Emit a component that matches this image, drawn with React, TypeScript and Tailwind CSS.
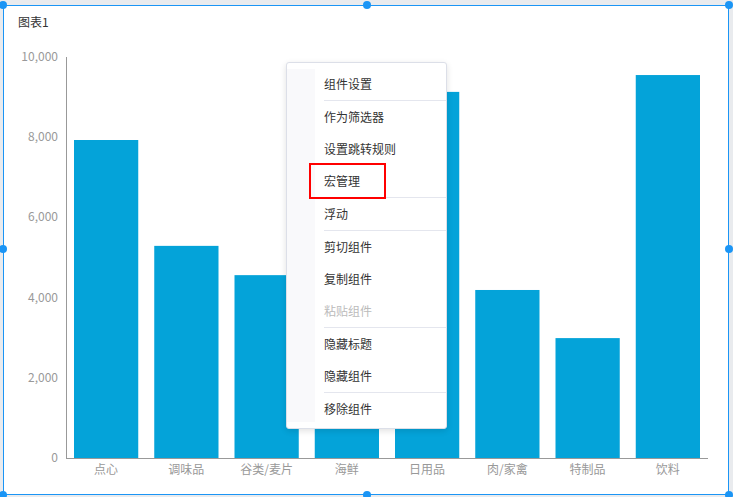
import React from 'react';

const font = '"Noto Sans CJK SC", "Noto Sans", sans-serif';

const categories = [
    { name: '点心', value: 7930 },
    { name: '调味品', value: 5290 },
    { name: '谷类/麦片', value: 4560 },
    { name: '海鲜', value: 5700 },
    { name: '日用品', value: 9130 },
    { name: '肉/家禽', value: 4190 },
    { name: '特制品', value: 2990 },
    { name: '饮料', value: 9550 },
];

const menu = [
    { label: '组件设置', sep: true },
    { label: '作为筛选器' },
    { label: '设置跳转规则' },
    { label: '宏管理', sep: true },
    { label: '浮动', sep: true },
    { label: '剪切组件' },
    { label: '复制组件' },
    { label: '粘贴组件', disabled: true, sep: true },
    { label: '隐藏标题' },
    { label: '隐藏组件', sep: true },
    { label: '移除组件' },
];

// plot area in svg coords
const axisX = 62;
const top = 27;
const bottom = 428;
const right = 704;
const step = (right - axisX) / categories.length;
const yOf = (v: number) => bottom - (v / 10000) * (bottom - top);

function Handle({ className }: { className: string }) {
    return <div className={`absolute w-2 h-2 rounded-full bg-[#1b95f5] ${className}`} />;
}

export default function App() {
    return (
        <div className="w-[733px] h-[497px] bg-[#e9ebee] pt-[5px] pl-[3px] overflow-hidden" style={{ fontFamily: font }}>
            <div className="relative w-[726px] h-[490px] bg-white border border-[#1b95f5]">
                <div className="pl-[14px] pt-[8px] h-[24px] text-[12px] leading-[16px] text-[#333]">图表1</div>
                <svg width="724" height="464" className="block">
                    {[0, 2000, 4000, 6000, 8000, 10000].map((v) => (
                        <text key={v} x="54" y={yOf(v) + 4} textAnchor="end" fontSize="12" fill="#999">
                            {v.toLocaleString('en-US')}
                        </text>
                    ))}
                    {categories.map((c, i) => (
                        <g key={c.name}>
                            <rect x={axisX + step * i + 8} y={yOf(c.value)} width={step - 16} height={bottom - yOf(c.value)} fill="#04a3d9" />
                            <text x={axisX + step * (i + 0.5)} y="444" textAnchor="middle" fontSize="12" fill="#999">
                                {c.name}
                            </text>
                        </g>
                    ))}
                    <line x1={axisX + 0.5} y1={top} x2={axisX + 0.5} y2={bottom} stroke="#999" />
                    <line x1={axisX} y1={bottom + 0.5} x2={right} y2={bottom + 0.5} stroke="#999" />
                </svg>

                {/* context menu */}
                <div className="absolute left-[282px] top-[56px] w-[161px] h-[367px] bg-white border border-[#dcdfe8] rounded-[3px] shadow-[0_2px_6px_rgba(0,0,0,0.12)] flex">
                    <div className="w-[28px] bg-[#f9f9fb] my-[6px]" />
                    <div className="flex-1 pt-[5px]">
                        {menu.map((m) => (
                            <div
                                key={m.label}
                                className={`h-[32.5px] ml-[9px] flex items-center text-[12px] ${m.disabled ? 'text-[#bbb]' : 'text-[#333]'} ${m.sep ? 'border-b border-[#e4e6ee]' : ''}`}
                            >
                                {m.label}
                            </div>
                        ))}
                    </div>
                </div>

                {/* highlight box */}
                <div className="absolute left-[305px] top-[157px] w-[77px] h-[36px] border-2 border-[#ff0000]" />

                <Handle className="-left-[5px] -top-[5px]" />
                <Handle className="left-[359px] -top-[5px]" />
                <Handle className="-right-[5px] -top-[5px]" />
                <Handle className="-left-[5px] top-[239px]" />
                <Handle className="-right-[5px] top-[239px]" />
                <Handle className="-left-[5px] -bottom-[5px]" />
                <Handle className="left-[359px] -bottom-[5px]" />
                <Handle className="-right-[5px] -bottom-[5px]" />
            </div>
        </div>
    );
}
